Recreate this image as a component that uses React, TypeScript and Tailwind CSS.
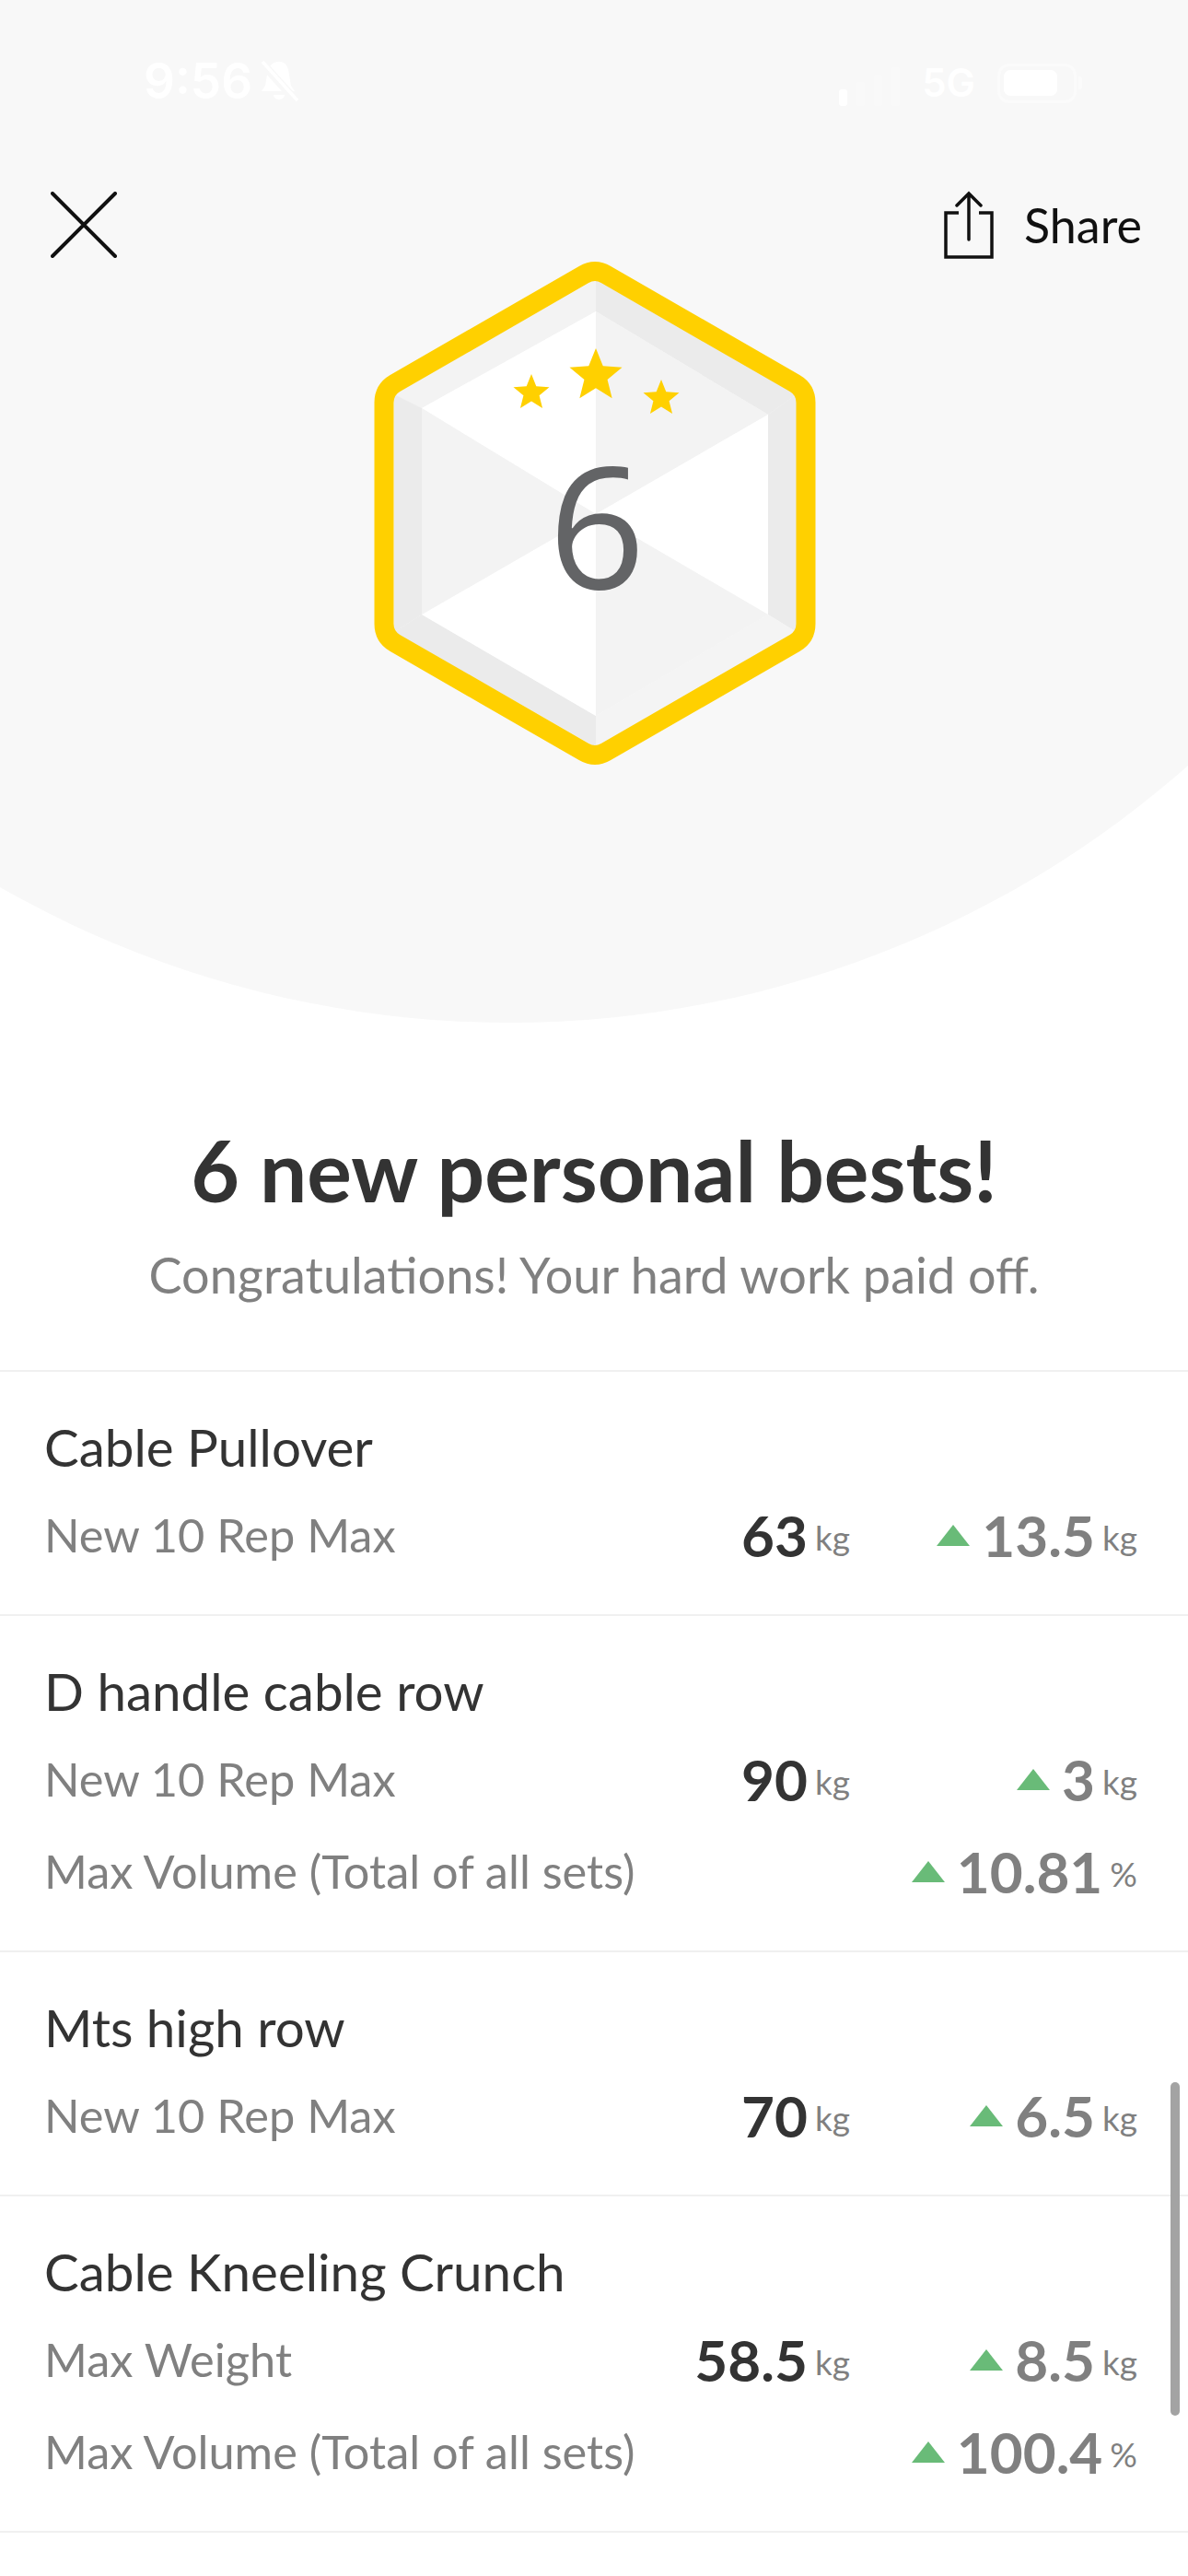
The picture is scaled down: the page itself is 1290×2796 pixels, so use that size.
import { Fragment } from "react";

type Stat = {
  label: string;
  value?: string;
  delta: string;
  deltaUnit: string;
};

type Exercise = {
  name: string;
  stats: Stat[];
};

const exercises: Exercise[] = [
  {
    name: "Cable Pullover",
    stats: [{ label: "New 10 Rep Max", value: "63", delta: "13.5", deltaUnit: "kg" }],
  },
  {
    name: "D handle cable row",
    stats: [
      { label: "New 10 Rep Max", value: "90", delta: "3", deltaUnit: "kg" },
      { label: "Max Volume (Total of all sets)", delta: "10.81", deltaUnit: "%" },
    ],
  },
  {
    name: "Mts high row",
    stats: [{ label: "New 10 Rep Max", value: "70", delta: "6.5", deltaUnit: "kg" }],
  },
  {
    name: "Cable Kneeling Crunch",
    stats: [
      { label: "Max Weight", value: "58.5", delta: "8.5", deltaUnit: "kg" },
      { label: "Max Volume (Total of all sets)", delta: "100.4", deltaUnit: "%" },
    ],
  },
];

// five pointed star for the badge
function starPoints(cx: number, cy: number, r: number) {
  const pts: string[] = [];
  for (let i = 0; i < 10; i++) {
    const radius = i % 2 === 0 ? r : r * 0.44;
    const a = (Math.PI / 5) * i - Math.PI / 2;
    pts.push(`${cx + radius * Math.cos(a)},${cy + radius * Math.sin(a)}`);
  }
  return pts.join(" ");
}

function StatusBar() {
  return (
    <div className="flex h-[110px] items-start justify-between pl-[156px] pr-[115px] pt-[63px] text-white">
      <div className="flex items-center gap-[8px]">
        <span className="font-['Inter',sans-serif] text-[53px] font-semibold leading-[50px]">9:56</span>
        <svg width="42" height="48" viewBox="0 0 42 48" fill="none">
          <path d="M21 3c-8 0-12 6-13 14l-2 12-4 6h36l-4-6-2-12C31 9 29 3 21 3z" fill="#fff" />
          <path d="M15 39h12a6 5 0 0 1-12 0z" fill="#fff" />
          <path d="M2 4l38 42" stroke="#f8f8f8" strokeWidth="9" />
          <path d="M3 3l38 42" stroke="#fff" strokeWidth="3.5" />
        </svg>
      </div>
      <div className="flex items-center gap-[24px]">
        <div className="flex items-end gap-[10px] pb-[2px] pt-[10px]">
          <div className="h-[18px] w-[9px] rounded-[3px] bg-white" />
          <div className="h-[26px] w-[9px] rounded-[3px] bg-[#f9f9f9]" />
          <div className="h-[34px] w-[9px] rounded-[3px] bg-[#f9f9f9]" />
          <div className="h-[42px] w-[9px] rounded-[3px] bg-[#f9f9f9]" />
        </div>
        <span className="font-['Inter',sans-serif] text-[42px] font-semibold leading-[44px]">5G</span>
        <div className="flex items-center gap-[2px]">
          <div className="flex h-[43px] w-[86px] items-center rounded-[13px] border-[3px] border-[#fbfbfb] p-[4px]">
            <div className="h-[28px] w-[58px] rounded-[7px] bg-white" />
          </div>
          <div className="h-[14px] w-[4px] rounded-r-[3px] bg-[#fbfbfb]" />
        </div>
      </div>
    </div>
  );
}

function Badge() {
  const lt = "458,443";
  const top = "647,338";
  const rt = "834,450";
  const rb = "834,667";
  const bottom = "647,777";
  const lb = "458,667";
  const center = "647,558";

  return (
    <div className="relative mx-auto -mt-[4px] h-[565px] w-[492px]">
      <svg width="492" height="565" viewBox="399 275 492 565">
        {/* bevel */}
        <polygon points={`647,303 428,428 ${lt} ${top}`} fill="#f3f3f3" />
        <polygon points={`647,303 865,428 ${rt} ${top}`} fill="#ebebeb" />
        <polygon points={`865,428 865,686 ${rb} ${rt}`} fill="#ebebeb" />
        <polygon points={`865,686 647,811 ${bottom} ${rb}`} fill="#f4f4f4" />
        <polygon points={`647,811 428,686 ${lb} ${bottom}`} fill="#ebebeb" />
        <polygon points={`428,686 428,428 ${lt} ${lb}`} fill="#ebebeb" />
        {/* cube faces */}
        <polygon points={`${top} ${lt} ${center}`} fill="#ffffff" />
        <polygon points={`${top} ${rt} ${center}`} fill="#f3f3f3" />
        <polygon points={`${rt} ${rb} ${center}`} fill="#ffffff" />
        <polygon points={`${rb} ${bottom} ${center}`} fill="#f3f3f3" />
        <polygon points={`${bottom} ${lb} ${center}`} fill="#ffffff" />
        <polygon points={`${lb} ${lt} ${center}`} fill="#f3f3f3" />
        {/* ring */}
        <path
          d="M658 298 L863 416 Q875 423 875 437 L875 677 Q875 691 863 698 L658 816 Q646 823 634 816 L429 698 Q417 691 417 677 L417 437 Q417 423 429 416 L634 298 Q646 291 658 298 Z"
          fill="none"
          stroke="#ffd000"
          strokeWidth="21"
        />
        <polygon points={starPoints(577, 426.5, 20.5)} fill="#ffd000" />
        <polygon points={starPoints(647, 408, 30)} fill="#ffd000" />
        <polygon points={starPoints(718, 432.5, 20.5)} fill="#ffd000" />
      </svg>
      <div className="absolute inset-x-0 top-[193px] pl-[6px] text-center font-['Open_Sans',sans-serif] text-[184px] font-normal leading-[200px] text-[#636466]">
        6
      </div>
    </div>
  );
}

function StatRow({ stat }: { stat: Stat }) {
  return (
    <div className="flex h-[100px] items-center">
      <div className="flex-1 text-[50.5px] leading-[60px] text-[#808080]">{stat.label}</div>
      {stat.value && (
        <div className="flex items-center">
          <span className="text-[62px] font-bold leading-[60px] text-[#333333]">{stat.value}</span>
          <span className="ml-[8px] pt-[5px] text-[37px] leading-[60px] text-[#808080]">kg</span>
        </div>
      )}
      <div className="flex w-[312px] items-center justify-end">
        <svg className="mr-[13px]" width="36" height="23" viewBox="0 0 36 23">
          <polygon points="18,0 36,23 0,23" fill="#69bb78" />
        </svg>
        <span className="text-[62px] font-bold leading-[60px] text-[#808080]">{stat.delta}</span>
        <span className="ml-[8px] pt-[5px] text-[37px] leading-[60px] text-[#808080]">{stat.deltaUnit}</span>
      </div>
    </div>
  );
}

export default function App() {
  return (
    <div className="relative h-[2796px] w-[1290px] overflow-hidden bg-white font-['Lato',sans-serif]">
      {/* grey curved backdrop */}
      <div className="absolute left-[-560px] top-[-1116px] h-[2226px] w-[2226px] rounded-full bg-[#f8f8f8]" />

      <div className="relative">
        <StatusBar />

        <div className="flex h-[169px] items-center justify-between pl-[55px] pr-[50px] pt-[99px]">
          <svg width="72" height="72" viewBox="0 0 72 72" fill="none" stroke="#111" strokeWidth="4" strokeLinecap="round">
            <path d="M2 2l68 68M70 2L2 70" />
          </svg>
          <div className="flex items-center gap-[32px]">
            <svg width="56" height="74" viewBox="0 0 56 74" fill="none" stroke="#111" strokeWidth="3.5">
              <path d="M17 24H3v48h50V24H39" />
              <path d="M28 53V3M15 16L28 3l13 13" strokeLinecap="round" />
            </svg>
            <span className="text-[52px] leading-[60px] text-[#111]">Share</span>
          </div>
        </div>

        <Badge />

        <div className="mt-[380px] text-center">
          <h1 className="text-[91px] font-bold leading-[100px] text-[#333333]">6 new personal bests!</h1>
          <p className="mt-[34px] text-[54px] leading-[60px] text-[#808080]">Congratulations! Your hard work paid off.</p>
        </div>

        <div className="mt-[73px] border-t-2 border-[#f0f0f0]">
          {exercises.map((ex) => (
            <Fragment key={ex.name}>
              <div className="border-b-2 border-[#f0f0f0] pl-[48px] pr-[55px] pb-[36px] pt-[46px]">
                <div className="mb-[11px] text-[56.5px] leading-[70px] text-[#333333]">{ex.name}</div>
                {ex.stats.map((s) => (
                  <StatRow key={s.label} stat={s} />
                ))}
              </div>
            </Fragment>
          ))}
        </div>
      </div>

      {/* scroll indicator */}
      <div className="absolute left-[1271px] top-[2260px] h-[362px] w-[10px] rounded-full bg-[#a3a3a3]" />
    </div>
  );
}
